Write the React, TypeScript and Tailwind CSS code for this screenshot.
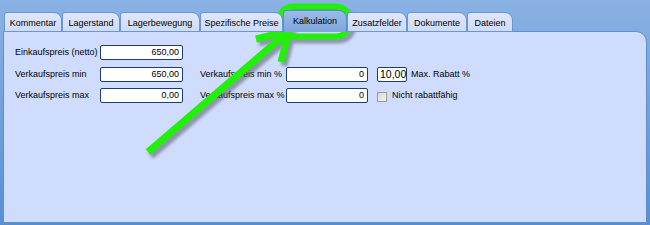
import React from 'react';

const tabs = [
  { label: 'Kommentar', w: 'w-[58px]' },
  { label: 'Lagerstand', w: 'w-[58px]' },
  { label: 'Lagerbewegung', w: 'w-[80px]' },
  { label: 'Spezifische Preise', w: 'w-[83px]' },
  { label: 'Kalkulation', w: 'w-[64px]', active: true },
  { label: 'Zusatzfelder', w: 'w-[60px]' },
  { label: 'Dokumente', w: 'w-[60px]' },
  { label: 'Dateien', w: 'w-[46px]' },
];

function NumField({ value, w }: { value: string; w: string }) {
  return (
    <div
      className={`${w} h-[15px] rounded-[2px] border border-[#1c3b7c] bg-white pr-[3px] text-right text-[9px] leading-[13px]`}
    >
      {value}
    </div>
  );
}

function Label({ text, w }: { text: string; w: string }) {
  return <div className={`${w} text-[9px] leading-[15px] whitespace-nowrap`}>{text}</div>;
}

// green markup drawn over the screenshot
function Annotation() {
  const shapes = (
    <>
      <rect x="278.5" y="6.5" width="72" height="30" rx="15" fill="none" strokeWidth="6" />
      <line x1="148" y1="152" x2="289" y2="31" strokeWidth="7" />
      <polyline points="256,39 289,31 281,62" fill="none" strokeWidth="7" strokeLinejoin="miter" />
    </>
  );
  return (
    <svg className="pointer-events-none absolute inset-0" width="650" height="225" viewBox="0 0 650 225">
      <defs>
        <filter id="blur" x="-10%" y="-10%" width="120%" height="120%">
          <feGaussianBlur stdDeviation="1.6" />
        </filter>
      </defs>
      <g transform="translate(3 4)" stroke="#555a66" opacity="0.55" filter="url(#blur)">
        {shapes}
      </g>
      <g stroke="#22f00a">{shapes}</g>
    </svg>
  );
}

export default function App() {
  return (
    <div className="relative h-[225px] w-[650px] overflow-hidden bg-linear-to-b from-[#8ab1e3] to-[#5590d0] px-[3px] pt-[10px] font-['Liberation_Sans',Arial,sans-serif] text-black">
      {/* tab strip */}
      <div className="relative z-10 -mb-px ml-px flex h-[22px] items-end">
        {tabs.map((t) =>
          t.active ? (
            <div
              key={t.label}
              className={`${t.w} h-[22px] rounded-tl-[3px] rounded-tr-[8px] border-x border-t border-[#5a8ad0] bg-linear-to-b from-[#9bbbe6] to-[#7ea5dc] pt-[4px] text-center text-[9px] leading-[12px]`}
            >
              {t.label}
            </div>
          ) : (
            <div
              key={t.label}
              className={`${t.w} h-[20px] rounded-tl-[3px] rounded-tr-[8px] border border-[#6a97d4] bg-linear-to-b from-[#dfe7fd] to-[#cfdbfc] pt-[4px] text-center text-[9px] leading-[12px]`}
            >
              {t.label}
            </div>
          )
        )}
      </div>

      {/* page */}
      <div className="h-[192px] rounded-tr-[11px] border border-[#5f8fd0] bg-[#d0dcfe] pl-[11px] pt-[13px]">
        <div className="flex flex-col gap-[6.5px]">
          <div className="flex items-center">
            <Label text="Einkaufspreis (netto)" w="w-[85px]" />
            <NumField value="650,00" w="w-[83px]" />
          </div>
          <div className="flex items-center">
            <Label text="Verkaufspreis min" w="w-[85px]" />
            <NumField value="650,00" w="w-[83px]" />
            <div className="w-[17px]" />
            <Label text="Verkaufspreis min %" w="w-[86px]" />
            <NumField value="0" w="w-[82px]" />
            <div className="ml-[9px] h-[15px] w-[30px] overflow-hidden whitespace-nowrap rounded-[2px] border border-[#1c3b7c] bg-white pl-[2px] text-[10.5px] leading-[13px]">
              10,00
            </div>
            <div className="ml-[4px] text-[9px] leading-[15px]">Max. Rabatt %</div>
          </div>
          <div className="flex items-center">
            <Label text="Verkaufspreis max" w="w-[85px]" />
            <NumField value="0,00" w="w-[83px]" />
            <div className="w-[17px]" />
            <Label text="Verkaufspreis max %" w="w-[86px]" />
            <NumField value="0" w="w-[82px]" />
            <div className="ml-[9px] mt-[2px] h-[10px] w-[10px] border border-[#9a9a9a] bg-linear-to-br from-[#d8d8d8] to-[#f4f4f4]" />
            <div className="ml-[5px] text-[9px] leading-[15px]">Nicht rabattfähig</div>
          </div>
        </div>
      </div>

      <Annotation />
    </div>
  );
}
